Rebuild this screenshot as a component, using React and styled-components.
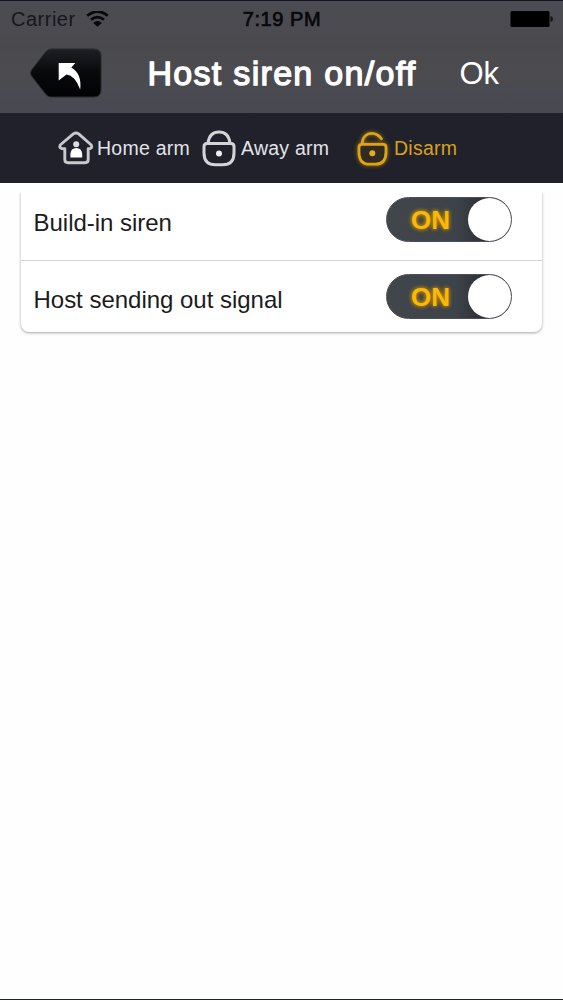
import React from 'react';
import styled, { createGlobalStyle } from 'styled-components';

const GlobalStyle = createGlobalStyle`
    * {
        box-sizing: border-box;
    }
    body {
        margin: 0;
        background: #fefefe;
        font-family: "Liberation Sans", Arial, sans-serif;
    }
`;

const Screen = styled.div`
    display: flex;
    flex-direction: column;
    height: 1000px;
    background: #fefefe;
    border-bottom: 1px solid #202124;
    overflow: hidden;
`;

const Header = styled.header`
    height: 113px;
    flex: none;
    border-top: 1px solid #15151d;
    background: linear-gradient(#4b4b53 0%, #4a4a4e 40%, #4b4b50 65%, #484853 100%);
`;

const StatusBar = styled.div`
    display: grid;
    grid-template-columns: 1fr auto 1fr;
    align-items: center;
    height: 36px;
    padding: 0 10px 0 11px;
    color: #08080a;
    font-size: 20px;
`;

const Carrier = styled.div`
    display: flex;
    align-items: center;
    gap: 10px;
    letter-spacing: 0.5px;
    color: #17171a;
`;

const Clock = styled.div`
    letter-spacing: 0.55px;
    -webkit-text-stroke: 0.7px #08080a;
`;

const BatteryIcon = styled.svg`
    justify-self: end;
`;

const NavBar = styled.div`
    display: flex;
    align-items: center;
    height: 72px;
    padding-left: 29px;
    color: #fff;
`;

const BackButton = styled.button`
    display: block;
    width: 73px;
    height: 50px;
    padding: 0;
    border: 0;
    background: none;
`;

const Title = styled.h1`
    width: 269px;
    margin: 0 0 0 45.5px;
    font-size: 34px;
    font-weight: normal;
    line-height: 40px;
    letter-spacing: 1.3px;
    white-space: nowrap;
    -webkit-text-stroke: 1.3px #fff;
`;

const OkButton = styled.button`
    margin: 0 0 0 43px;
    padding: 2px 0 0;
    border: 0;
    background: none;
    color: #fff;
    font-family: inherit;
    font-size: 31px;
    line-height: 38px;
`;

const ModeBar = styled.nav`
    display: grid;
    grid-template-columns: 145px 155px 1fr;
    align-items: center;
    flex: none;
    height: 70px;
    padding-left: 57px;
    background: #20212a;
`;

const Mode = styled.div`
    display: flex;
    align-items: center;
    color: ${props => (props.$active ? '#d9a11c' : '#e3e3e8')};
    font-size: 19.5px;
    letter-spacing: 0.25px;
    white-space: nowrap;

    svg {
        flex: none;
        overflow: visible;
        filter: ${props => (props.$active ? 'drop-shadow(0 0 2px #a97a00)' : 'none')};
    }
`;

const ModeLabel = styled.span`
    margin-left: ${props => props.$gap}px;
`;

const Card = styled.main`
    width: 521px;
    margin: 9px 0 0 21px;
    border-radius: 0 0 8px 8px;
    background: #fff;
    box-shadow: 0 1px 3px rgba(0, 0, 0, 0.35);
    clip-path: inset(0 -6px -6px -6px);
`;

const Row = styled.div`
    display: flex;
    justify-content: space-between;
    height: ${props => props.$height}px;
    padding: ${props => props.$top}px 30px 0 12.5px;

    & + & {
        border-top: 1px solid #d4d4d6;
    }
`;

const RowLabel = styled.span`
    color: #1b1b1d;
    font-size: 24px;
    line-height: 52px;
    letter-spacing: -0.02px;
`;

const Switch = styled.button`
    display: flex;
    justify-content: space-between;
    align-items: center;
    width: 126px;
    height: 45px;
    padding: 0 0 0 24px;
    border: 1px solid #4c4f54;
    border-radius: 23px;
    background: linear-gradient(90deg, #41464b, #3d434a 55%, #2c2f34 80%);
    font-family: inherit;
`;

const SwitchText = styled.span`
    padding-top: 1px;
    color: #f9b80a;
    font-size: 26px;
    font-weight: bold;
    text-shadow: 0 0 4px #c99000, 0 0 4px #a57900;
`;

const Knob = styled.span`
    width: 43px;
    height: 43px;
    border-radius: 50%;
    background: #fff;
`;

function WifiIcon() {
    return (
        <svg width="23" height="17" viewBox="0 0 23 17" fill="none" stroke="#08080a" strokeWidth="2.7">
            <path d="M1.2 4.7Q11.5 -3.6 21.8 4.7" />
            <path d="M5 8.7Q11.5 3.4 18 8.7" />
            <path d="M7.2 11.9Q11.5 8 15.8 11.9L11.5 15.8Z" fill="#08080a" stroke="none" />
        </svg>
    );
}

function BackIcon() {
    return (
        <svg width="73" height="50" viewBox="0 0 73 50">
            <defs>
                <linearGradient id="back" x1="0" y1="0" x2="0" y2="1">
                    <stop offset="0" stopColor="#1c1f23" />
                    <stop offset="0.5" stopColor="#08090b" />
                    <stop offset="1" stopColor="#020203" />
                </linearGradient>
            </defs>
            <path d="M22 1H65Q72 1 72 8V42Q72 49 65 49H22Q19 49 17 46.5L2.5 28Q0.5 25 2.5 22L17 3.5Q19 1 22 1Z" fill="url(#back)" stroke="#292b30" />
            <path d="M29.7 15H46.3L42.3 19.5Q53 25.5 51.2 41.5Q46 27.5 37.5 26.5L29.7 32.5Z" fill="#fff" />
        </svg>
    );
}

function HomeIcon() {
    return (
        <svg width="38" height="36" viewBox="0 0 38 36" fill="none" stroke="#c9c9cd" strokeWidth="2.9" strokeLinejoin="round">
            <path d="M16.3 3.9Q19 2 21.7 3.9L34.3 15Q36 19 31.2 18.8V29.5Q31.2 32.7 28 32.7H11Q7.8 32.7 7.8 29.5V18.8Q1.5 19 3.2 15Z" />
            <circle cx="19.2" cy="14.2" r="3" fill="#dedee1" stroke="none" />
            <path d="M13.4 27.5V24Q13.8 18 19.2 18Q24.8 18 25.2 24V27.5Z" fill="#fff" stroke="none" />
        </svg>
    );
}

function LockIcon() {
    return (
        <svg width="34" height="38" viewBox="0 0 34 38" fill="none" stroke="#d4d4d8" strokeWidth="3">
            <path d="M6 14C7 6.5 11.5 3 17 3S27 6.5 28 14" />
            <path d="M5 14.5H29Q32 14.5 32 17.5V24Q32 35.8 20.5 35.8H13.5Q2 35.8 2 24V17.5Q2 14.5 5 14.5Z" />
            <circle cx="17" cy="24.5" r="3" fill="#eeeef0" stroke="none" />
        </svg>
    );
}

function UnlockIcon() {
    return (
        <svg width="30" height="36" viewBox="0 0 30 36" fill="none" stroke="#dda514" strokeWidth="2.8" strokeLinecap="round">
            <path d="M5.2 13.5C5.6 7 9.5 3.4 14.8 3.4Q20.5 3.4 24.4 8.8" />
            <path d="M5 14.3H26Q29 14.3 29 17.3V22Q29 34.2 18.5 34.2H12.5Q2 34.2 2 22V17.3Q2 14.3 5 14.3Z" fill="#302c22" />
            <circle cx="15.3" cy="23.3" r="3" fill="#e5ad19" stroke="none" />
        </svg>
    );
}

function Toggle() {
    return (
        <Switch type="button" role="switch" aria-checked="true">
            <SwitchText>ON</SwitchText>
            <Knob />
        </Switch>
    );
}

function App() {
    return (
        <Screen>
            <GlobalStyle />
            <Header>
                <StatusBar>
                    <Carrier>
                        Carrier
                        <WifiIcon />
                    </Carrier>
                    <Clock>7:19 PM</Clock>
                    <BatteryIcon width="43" height="17" viewBox="0 0 43 17">
                        <rect x="0.5" y="0" width="39" height="16" rx="1.5" fill="#000" />
                        <path d="M40.5 5Q43 5.5 43 8T40.5 11Z" fill="#111" />
                    </BatteryIcon>
                </StatusBar>
                <NavBar>
                    <BackButton type="button">
                        <BackIcon />
                    </BackButton>
                    <Title>Host siren on/off</Title>
                    <OkButton type="button">Ok</OkButton>
                </NavBar>
            </Header>
            <ModeBar>
                <Mode>
                    <HomeIcon />
                    <ModeLabel $gap={2}>Home arm</ModeLabel>
                </Mode>
                <Mode>
                    <LockIcon />
                    <ModeLabel $gap={5}>Away arm</ModeLabel>
                </Mode>
                <Mode $active>
                    <UnlockIcon />
                    <ModeLabel $gap={7}>Disarm</ModeLabel>
                </Mode>
            </ModeBar>
            <Card>
                <Row $height={68} $top={5}>
                    <RowLabel>Build-in siren</RowLabel>
                    <Toggle />
                </Row>
                <Row $height={72} $top={13}>
                    <RowLabel>Host sending out signal</RowLabel>
                    <Toggle />
                </Row>
            </Card>
        </Screen>
    );
}

export default App;
